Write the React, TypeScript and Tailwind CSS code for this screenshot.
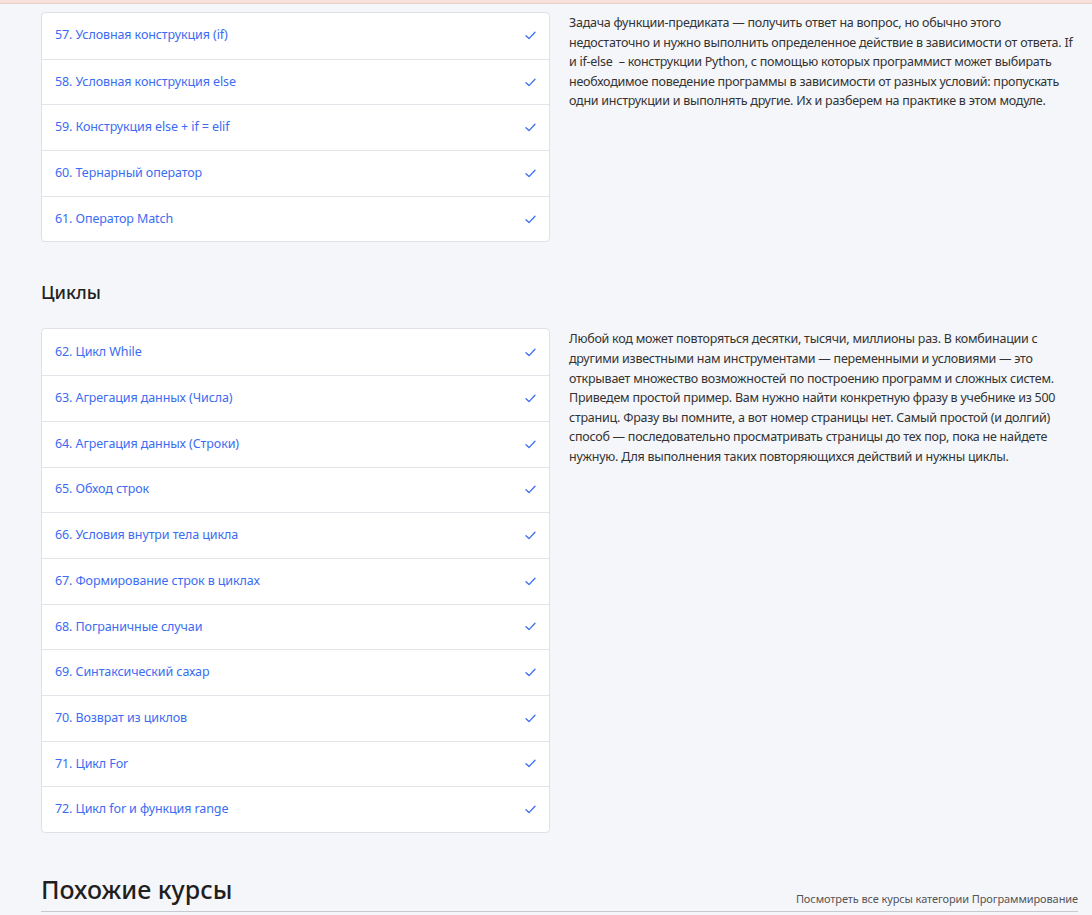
import React from "react";

const group1 = [
  "57. Условная конструкция (if)",
  "58. Условная конструкция else",
  "59. Конструкция else + if = elif",
  "60. Тернарный оператор",
  "61. Оператор Match",
];

const group2 = [
  "62. Цикл While",
  "63. Агрегация данных (Числа)",
  "64. Агрегация данных (Строки)",
  "65. Обход строк",
  "66. Условия внутри тела цикла",
  "67. Формирование строк в циклах",
  "68. Пограничные случаи",
  "69. Синтаксический сахар",
  "70. Возврат из циклов",
  "71. Цикл For",
  "72. Цикл for и функция range",
];

function Check() {
  return (
    <svg width="11" height="9" viewBox="0 0 11 9" fill="none">
      <path d="M1 4.8 L4 7.6 L10 1.2" stroke="#3b6cf2" strokeWidth="1.3" strokeLinecap="round" strokeLinejoin="round" />
    </svg>
  );
}

function Card({ items }: { items: string[] }) {
  return (
    <div className="bg-white border border-[#dfe1e8] rounded-[4px] overflow-hidden">
      {items.map((t, i) => (
        <div
          key={t}
          className={
            "h-[45.7px] flex items-center justify-between pl-[13px] pr-[13px] " +
            (i > 0 ? "border-t border-[#e2e4ea]" : "")
          }
        >
          <span className="text-[12.5px] tracking-[-0.1px] text-[#3b6cf2]">{t}</span>
          <Check />
        </div>
      ))}
    </div>
  );
}

export default function App() {
  return (
    <div
      className="min-h-[915px] bg-[#f5f6fa] text-[#2b2b2b]"
      style={{ fontFamily: '"Noto Sans", "Open Sans", sans-serif' }}
    >
      <div className="h-[4px] bg-[#f8e1da] border-b border-[#e6cfc8]" />
      <div className="pl-[41px] pr-[14px] pt-[8px]">
        <div className="grid grid-cols-[509px_1fr] gap-x-[19px]">
          <Card items={group1} />
          <p className="text-[12.5px] leading-[19.6px] tracking-[-0.25px] text-[#333] pt-[1px] -mr-[4px]">
            Задача функции-предиката — получить ответ на вопрос, но обычно этого недостаточно и нужно
            выполнить определенное действие в зависимости от ответа. If и if-else&nbsp; – конструкции
            Python, с помощью которых программист может выбирать необходимое поведение программы в
            зависимости от разных условий: пропускать одни инструкции и выполнять другие. Их и разберем
            на практике в этом модуле.
          </p>
        </div>

        <h2 className="text-[18px] leading-[27px] font-medium text-[#222] mt-[37px] mb-[22px]">Циклы</h2>

        <div className="grid grid-cols-[509px_1fr] gap-x-[19px]">
          <Card items={group2} />
          <p className="text-[12.5px] leading-[19.6px] tracking-[-0.25px] text-[#333] pt-[1px] -mr-[4px]">
            Любой код может повторяться десятки, тысячи, миллионы раз. В комбинации с другими
            известными нам инструментами — переменными и условиями — это открывает множество
            возможностей по построению программ и сложных систем. Приведем простой пример. Вам нужно
            найти конкретную фразу в учебнике из 500 страниц. Фразу вы помните, а вот номер страницы
            нет. Самый простой (и долгий) способ — последовательно просматривать страницы до тех пор,
            пока не найдете нужную. Для выполнения таких повторяющихся действий и нужны циклы.
          </p>
        </div>

        <div className="mt-[41px] flex items-end justify-between border-b border-[#c8cad0] pb-[6px]">
          <h2 className="text-[25px] leading-[31px] font-medium text-[#1f1f1f]">Похожие курсы</h2>
          <a className="text-[11px] leading-[14px] tracking-[-0.1px] text-[#555] -mb-[1px]">Посмотреть все курсы категории Программирование</a>
        </div>
      </div>
    </div>
  );
}
